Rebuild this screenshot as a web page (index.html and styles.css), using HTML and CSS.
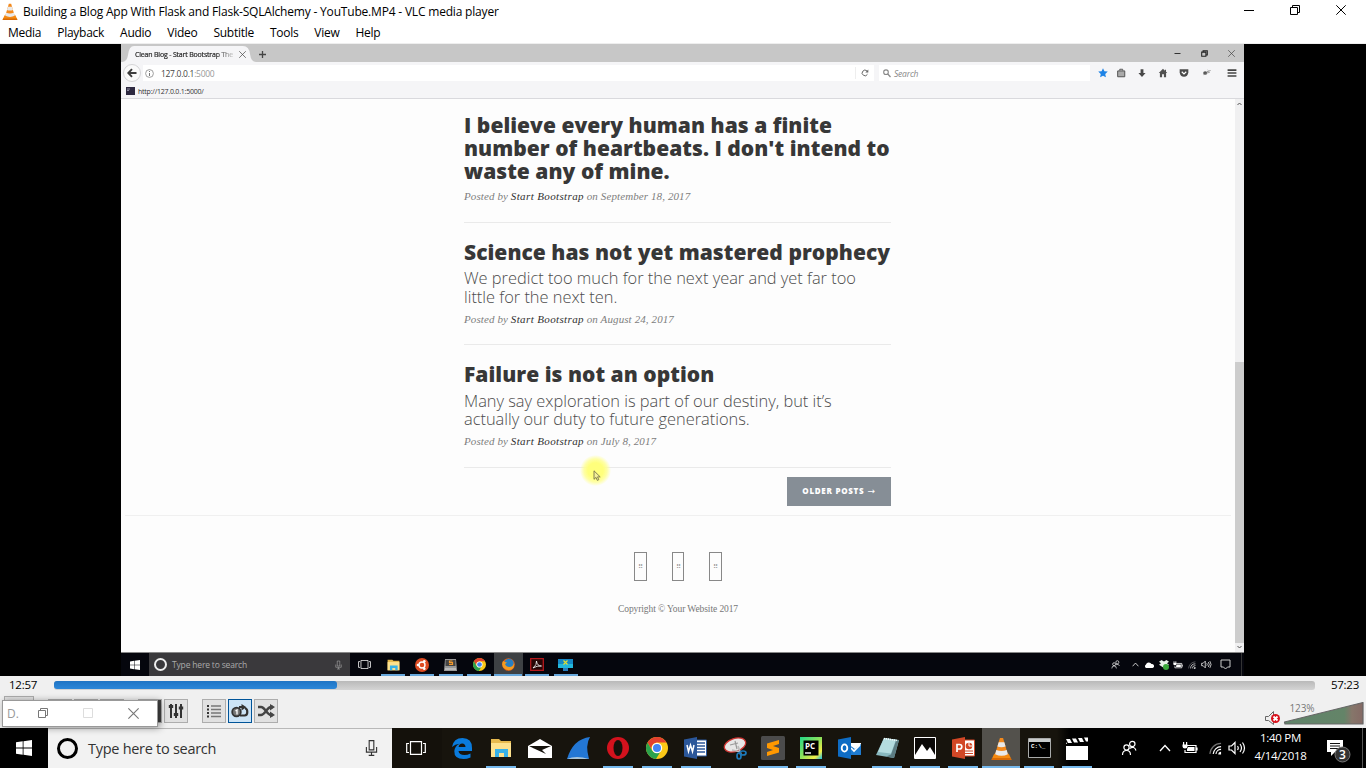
FILE: index.html
```html
<!DOCTYPE html>
<html lang="en">
<head>
<meta charset="utf-8">
<title>VLC media player</title>
<link rel="stylesheet" href="styles.css">
</head>
<body>
<svg width="0" height="0" class="defs">
  <symbol id="cone" viewBox="0 0 20 22"><path d="M3 16h14l2.500 5.500H.5z" fill="#f58a10"/><path d="M1 20h18l.7 2H.3z" fill="#d96a05"/><path d="M8.500 1h3l4.700 16q-6 3.500-12.500 0z" fill="#f3891c"/><path d="M7.300 5h5.400l1.200 4q-4 1.500-7.800 0zM5 12.500q5 2 10 0l1.100 4q-6 3-12.200 0z" fill="#e9e9e9"/></symbol>
  <symbol id="win" viewBox="0 0 16 16"><path d="M0 2.300 6.700 1.300V7.600H0zM7.500 1.200 16 0v7.600H7.500zM0 8.400h6.700v6.300L0 13.700zM7.500 8.400H16V16l-8.500-1.200z" fill="#fff"/></symbol>
  <symbol id="mic" viewBox="0 0 14 18"><path d="M4.500 1h5v10h-5zM1.500 8v5.500h11V8M7 13.500V17M4 17h6" fill="none" stroke="currentColor" stroke-width="1.200"/></symbol>
  <symbol id="task" viewBox="0 0 20 14"><path d="M4.500.7h11v12.600h-11zM3 2.500H.7v9H3M17 2.500h2.300v9H17" fill="none" stroke="#fff" stroke-width="1.200"/></symbol>
  <symbol id="folder" viewBox="0 0 22 20"><path d="M1 1h8l2 2h10v16H1z" fill="#e6b94e"/><path d="M1 5h20v14H1z" fill="#fde18d"/><path d="M5 11h13v8h-4v-4H9v4H5z" fill="#37b1e8"/></symbol>
  <symbol id="chrome" viewBox="0 0 22 22"><circle cx="11" cy="11" r="11" fill="#fbc817"/><path d="M1.500 5.500A11 11 0 0 1 20.500 5.500H11A5.500 5.500 0 0 0 6.200 13.800z" fill="#e2402f"/><path d="M1.500 5.500A11 11 0 0 0 10 22l5-8.300A5.500 5.500 0 0 1 6.200 13.700z" fill="#2ba24c"/><circle cx="11" cy="11" r="5.200" fill="#fff"/><circle cx="11" cy="11" r="4" fill="#4285f4"/></symbol>
  <symbol id="people" viewBox="0 0 16 16"><path d="M1.500 15q0-4.500 4-4.500t4 4.500M8.500 8.500q5-3 6.500 2" fill="none" stroke="#fff" stroke-width="1.200"/><circle cx="5.500" cy="7.500" r="2.600" fill="none" stroke="#fff" stroke-width="1.200"/><circle cx="11.300" cy="4" r="2.700" fill="none" stroke="#fff" stroke-width="1.200"/></symbol>
  <symbol id="up" viewBox="0 0 12 8"><path d="M1 7 6 1.500 11 7" fill="none" stroke="#fff" stroke-width="1.300"/></symbol>
  <symbol id="battery" viewBox="0 0 16 12"><path d="M5 3.500h9v7H3V8M15 5.500v3" fill="none" stroke="#fff" stroke-width="1.200"/><path d="M6 5h6.500v4H5V7zM.5 2.500h5v2q0 2-2.500 2T.5 4.500zM1 0h1.200v3H1zM4 0h1.200v3H4z" fill="#fff"/></symbol>
  <symbol id="wifi" viewBox="0 0 14 14"><g fill="none" stroke="#fff" stroke-width="1.200"><path d="M1 13A12 12 0 0 1 13 1.500" opacity=".45"/><path d="M4.500 13A8.500 8.500 0 0 1 13 5"/><path d="M7.500 13A5.500 5.500 0 0 1 13 8"/></g><path d="M10 13.500a3 3 0 0 1 3-3v3z" fill="#fff"/></symbol>
  <symbol id="sound" viewBox="0 0 18 14"><path d="M1 5h2.500L7 1.500v11L3.500 9H1zM9.500 5q1.500 2 0 4M12 3q3 4 0 8M14.500 1.500q4 5.500 0 11" fill="none" stroke="#fff" stroke-width="1.200"/></symbol>
  <symbol id="restore" viewBox="0 0 10 10"><path d="M.5 2.500h7v7h-7zM2.500 2.500v-2h7v7h-2" fill="none" stroke="currentColor"/></symbol>
  <symbol id="close" viewBox="0 0 10 10"><path d="M.3.3l9.400 9.400M9.700.3.300 9.700" fill="none" stroke="currentColor"/></symbol>
</svg>

<div class="desktop">
  <header class="titlebar">
    <svg class="app-cone"><use href="#cone"/></svg>
    <span class="t title">Building a Blog App With Flask and Flask-SQLAlchemy - YouTube.MP4 - VLC media player</span>
    <div class="winbtns">
      <svg width="10" height="10"><path d="M0 5.500h10" stroke="#000"/></svg>
      <svg width="10" height="10"><use href="#restore"/></svg>
      <svg width="10" height="10"><use href="#close"/></svg>
    </div>
  </header>
  <nav class="menubar">
    <span>Media</span><span>Playback</span><span>Audio</span><span>Video</span><span>Subtitle</span><span>Tools</span><span>View</span><span>Help</span>
  </nav>

  <main class="stage">
    <section class="video">
      <div class="tabs">
        <div class="tab"><span class="t tab-text">Clean Blog - Start Bootstrap The</span><svg width="7" height="7" viewBox="0 0 10 10"><use href="#close"/></svg></div>
        <svg class="plus" width="9" height="9"><path d="M4.500 1v7M1 4.500h7" stroke="#444" stroke-width="1.300"/></svg>
        <div class="ff-win">
          <svg width="7" height="7"><path d="M.5 3.500h6" stroke="#333"/></svg>
          <svg width="7" height="7" viewBox="0 0 10 10"><path d="M1 3h6v6H1zM3 3V1h6v6H7" fill="none" stroke="#222" stroke-width="1.500"/></svg>
          <svg width="7" height="7" viewBox="0 0 10 10"><use href="#close"/></svg>
        </div>
      </div>
      <div class="navrow">
        <div class="back"><svg width="10" height="10" viewBox="0 0 10 10"><path d="M9.500 5H2M5 1.200 1.300 5 5 8.800" fill="none" stroke="#3d3d3d" stroke-width="1.900"/></svg></div>
        <div class="urlbar">
          <svg width="9" height="9" viewBox="0 0 9 9"><circle cx="4.500" cy="4.500" r="3.900" fill="none" stroke="#888" stroke-width=".8"/><path d="M4.500 2v1M4.500 4v3" stroke="#777"/></svg>
          <span class="t url">127.0.0.1<i>:5000</i></span>
          <span class="reload"><svg width="8" height="8" viewBox="0 0 8 8"><path d="M6.500 5.200A2.800 2.800 0 1 1 6 2" fill="none" stroke="#666"/><path d="M7.300.5v3H4.300z" fill="#666"/></svg></span>
        </div>
        <div class="ffsearch"><svg width="8" height="9" viewBox="0 0 8 9"><circle cx="3" cy="3.200" r="2.300" fill="none" stroke="#888" stroke-width="1.100"/><path d="M4.800 5 7.500 8" stroke="#888" stroke-width="1.200"/></svg><span class="t">Search</span></div>
        <div class="fficons">
          <svg viewBox="0 0 12 12"><path d="M6 .2l1.700 3.600 4 .5-3 2.800.8 4.100L6 9.200 2.500 11.200l.8-4.100L.3 4.300l4-.5z" fill="#1e83e6"/></svg>
          <svg viewBox="0 0 12 12"><path d="M2 3.500h8.500v7H2z" fill="#aaa" stroke="#555" stroke-width="1.200"/><path d="M4.500 3V1.500h3.500V3" fill="none" stroke="#555" stroke-width="1.200"/></svg>
          <svg viewBox="0 0 12 12"><path d="M4.300 1.500h3.400V6h2.600L6 10.800 1.700 6h2.600z" fill="#484848"/></svg>
          <svg viewBox="0 0 12 12"><path d="M6 1 .9 6h1.400v5h2.600V7.500h2.200V11h2.600V6h1.400L9.600 4.500V2H8.200v1.200z" fill="#505050"/></svg>
          <svg viewBox="0 0 12 12"><path d="M.8 1.500h10.400v4Q10.500 10.500 6 10.500T.8 5.500z" fill="#4a4a4a"/><path d="M3.300 4.500 6 7l2.700-2.500" fill="none" stroke="#fff" stroke-width="1.400"/></svg>
          <svg viewBox="0 0 12 12"><ellipse cx="5" cy="6" rx="2.400" ry="2" fill="#555"/><path d="M7 4.500 11.500 3M7 6l3.500-.8M3 8l4-1M8 2.500l1 1" stroke="#888"/></svg>
          <svg viewBox="0 0 12 12"><path d="M.7 2.500h10.600M.7 6h10.600M.7 9.500h10.600" stroke="#444" stroke-width="1.900"/></svg>
        </div>
      </div>
      <div class="bookmarks"><svg width="9" height="8"><path d="M0 0h9v8H0z" fill="#2d2940"/><path d="M1 2h3M1 3.500h2" stroke="#aab" stroke-width=".8"/></svg><span class="t">http://127.0.0.1:5000/</span></div>

      <div class="page">
        <div class="content">
          <div class="posts">
            <article class="post">
              <h2>I believe every human has a finite<br>number of heartbeats. I don't intend to<br>waste any of mine.</h2>
              <p class="meta">Posted by <b>Start Bootstrap</b> on September 18, 2017</p>
            </article>
            <article class="post">
              <h2>Science has not yet mastered prophecy</h2>
              <h3>We predict too much for the next year and yet far too<br>little for the next ten.</h3>
              <p class="meta">Posted by <b>Start Bootstrap</b> on August 24, 2017</p>
            </article>
            <article class="post">
              <h2>Failure is not an option</h2>
              <h3>Many say exploration is part of our destiny, but it’s<br>actually our duty to future generations.</h3>
              <p class="meta">Posted by <b>Start Bootstrap</b> on July 8, 2017</p>
            </article>
            <div class="pager"><a class="older">OLDER POSTS <span class="arrow">→</span></a></div>
          </div>
          <footer class="foot">
            <div class="social"><span>⠿</span><span>⠿</span><span>⠿</span></div>
            <p>Copyright © Your Website 2017</p>
          </footer>
          <div class="halo"><svg width="8" height="11" viewBox="0 0 8 11"><path d="M1 .8v8.500l2-1.900 1.300 3 1.500-.7-1.300-2.800h2.700z" fill="#f3ef9a" stroke="#77734a" stroke-width=".9"/></svg></div>
        </div>
        <div class="scroll"><svg width="5" height="4"><path d="M.5 3 2.500 1l2 2" fill="none" stroke="#555"/></svg><i></i><svg width="5" height="4"><path d="M.5 1l2 2 2-2" fill="none" stroke="#555"/></svg></div>
      </div>

      <div class="minibar">
        <div class="ministart"><svg width="10" height="10"><use href="#win"/></svg></div>
        <div class="minisearch"><i class="ring"></i><span class="t">Type here to search</span><svg class="mmic" width="7" height="10"><use href="#mic"/></svg></div>
        <div class="miniapps">
          <div><svg width="13" height="9"><use href="#task"/></svg></div>
          <div class="on"><svg width="13" height="12"><use href="#folder"/></svg></div>
          <div class="on"><svg width="14" height="14" viewBox="0 0 14 14"><circle cx="7" cy="7" r="7" fill="#dd4b22"/><circle cx="7" cy="7" r="3" fill="none" stroke="#fff" stroke-width="1.400"/><g fill="#fff"><circle cx="3" cy="7" r="1.300"/><circle cx="9.300" cy="3.300" r="1.300"/><circle cx="9.300" cy="10.700" r="1.300"/></g></svg></div>
          <div class="on"><svg width="13" height="12" viewBox="0 0 13 12"><path d="M1 0h11l1 12H0z" fill="#999"/><path d="M1.500 1h10v6h-10z" fill="#444"/><path d="M8.500 2H5.500v1.700h3v1.800H5" fill="none" stroke="#f59a2c" stroke-width="1.200"/><path d="M1 9h11v2H1z" fill="#bbb"/></svg></div>
          <div class="on"><svg width="13" height="13"><use href="#chrome"/></svg></div>
          <div class="on active"><svg width="13" height="13" viewBox="0 0 13 13"><circle cx="6.500" cy="6.500" r="6.300" fill="#e66012"/><circle cx="7" cy="5.500" r="4.700" fill="#287fc2"/><path d="M1 3q2 1 4 1.500L3 6q1 3 4.500 3T12 5q.8 4.500-2.500 6.500t-7-1T1 3z" fill="#f49b20"/></svg></div>
          <div class="on"><svg width="14" height="13" viewBox="0 0 14 13"><path d="M.7.7h12.600v11.600H.7z" fill="#270606" stroke="#b4191d" stroke-width="1.300"/><path d="M3 10q4-3 3.500-7Q7 8 11.500 8 7 7.500 3 10z" fill="none" stroke="#fff" stroke-width=".8"/></svg></div>
          <div class="on"><svg width="15" height="12" viewBox="0 0 15 12"><path d="M0 0h15v9H0z" fill="#1688c5"/><path d="M0 5h15v4H0z" fill="#22b7dc"/><path d="M5.500 1.500l4 4M9.500 1.500l-4 4" stroke="#dfdf35" stroke-width="1.200"/><path d="M5 9h5v3H5z" fill="#257bbb"/></svg></div>
        </div>
        <div class="minitray">
          <svg width="9" height="9"><use href="#people"/></svg><svg width="7" height="5"><use href="#up"/></svg>
          <svg width="10" height="6" viewBox="0 0 10 6"><path d="M2 6a2 2 0 0 1 0-3.500 3 3 0 0 1 5.500-.5A2 2 0 0 1 8.500 6z" fill="#fff"/></svg>
          <svg width="10" height="10" viewBox="0 0 10 10"><path d="M2.500 0 5 1.500 7.500 0 10 1.700 8 3.200l2 1.500L5 8 0 4.700l2-1.500L0 1.700z" fill="#e8f2e8"/><circle cx="7" cy="7" r="3" fill="#3aa83a"/></svg>
          <svg width="10" height="8"><use href="#battery"/></svg><svg width="8" height="8"><use href="#wifi"/></svg><svg width="11" height="9"><use href="#sound"/></svg>
          <svg width="11" height="11" viewBox="0 0 11 11"><path d="M1 1h9v7H7.500l-2 2-2-2H1z" fill="none" stroke="#ccc"/></svg>
        </div>
      </div>
    </section>
  </main>

  <div class="seek"><span class="t">12:57</span><div class="track"><i></i></div><span class="t">57:23</span></div>
  <div class="controls">
    <div class="btns">
      <b class="play"></b>
      <div><b></b><b></b><b></b></div>
      <div><b class="dark"></b><b><svg width="16" height="16" viewBox="0 0 16 16"><path d="M3 1v14M8 1v14M13 1v14" stroke="#333" stroke-width="2"/><path d="M.8 3.500h4.400M5.800 11.500h4.400M10.800 5h4.400" stroke="#333" stroke-width="3"/></svg></b></div>
      <div><b><svg width="16" height="14" viewBox="0 0 16 14"><path d="M1 2h2M1 5.500h2M1 9h2M1 12.500h2" stroke="#333" stroke-width="1.800"/><path d="M5 2h10M5 5.500h10M5 9h10M5 12.500h10" stroke="#777" stroke-width="1.400"/></svg></b><b class="sel"><svg width="18" height="14" viewBox="0 0 18 14"><path d="M8 3h4M9 11.500h4.500q2.800 0 2.800-3.500T14 4.500" fill="none" stroke="#333" stroke-width="2.200"/><path d="M10.500 0l5 3.300-5 3.300z" fill="#333"/><circle cx="5.500" cy="8" r="4.300" fill="#777" stroke="#333" stroke-width="1.800"/><path d="M4.500 7 6 6v4.500" fill="none" stroke="#fff" stroke-width="1.300"/></svg></b><b><svg width="18" height="14" viewBox="0 0 18 14"><path d="M1 3h3q2 0 5 4t5 4h2M1 11h3q2 0 5-4t5-4h2" fill="none" stroke="#444" stroke-width="2.400"/><path d="M13 0l5 3-5 3.500zM13 7.500l5 3.500-5 3z" fill="#444"/></svg></b></div>
    </div>
    <div class="volume">
      <svg width="100" height="32" viewBox="0 0 100 32"><defs><linearGradient id="vg"><stop offset="0" stop-color="#60846a"/><stop offset=".76" stop-color="#648468"/><stop offset=".86" stop-color="#86766a"/><stop offset="1" stop-color="#856a65"/></linearGradient></defs><path d="M1.500 22.500h3l5-5v13l-5-4h-3z" fill="#eee" stroke="#666"/><circle cx="11.500" cy="24.500" r="4.500" fill="#d8101a"/><path d="M9.500 22.500l4 4M13.500 22.500l-4 4" stroke="#fff" stroke-width="1.800"/><path d="M20.500 28 99 8.500v21.500H21z" fill="url(#vg)" stroke="#666" stroke-linejoin="round" stroke-width="1.200"/><text x="25.500" y="18" textLength="25" class="vol">123%</text></svg>
    </div>
    <div class="popup"><span>D.</span><svg width="10" height="10" color="#777"><use href="#restore"/></svg><svg width="10" height="10"><path d="M.5.500h9v9h-9z" fill="none" stroke="#ddd"/></svg><svg width="11" height="11" color="#777"><use href="#close"/></svg></div>
  </div>

  <footer class="taskbar">
    <div class="start"><svg width="16" height="16"><use href="#win"/></svg></div>
    <div class="search"><i class="ring"></i><span class="t">Type here to search</span><svg class="bmic" width="13" height="18"><use href="#mic"/></svg></div>
    <div class="tview"><svg width="20" height="14"><use href="#task"/></svg></div>
    <div class="apps">
      <div><svg width="20" height="21" viewBox="0 0 20 21"><path d="M0 9Q1.500 0 10.500 0 20 0 20 10v3H6.500q.5 4 6 4 3 0 6-1.500v4Q15 21 11.500 21 2 21 2.300 13 2.800 8 7.500 5.700 3 6 0 9zm6.600 0h6.900q-.2-3.500-3.300-3.500Q7.200 5.500 6.600 9z" fill="#0a7bdc"/></svg></div>
      <div class="on"><svg width="22" height="20"><use href="#folder"/></svg></div>
      <div><svg width="24" height="19" viewBox="0 0 24 19"><path d="M0 7 12 0l12 7v12H0z" fill="#fff"/><path d="M1 7l22 0-9 4 4 4L6 9.500z" fill="#15120c"/></svg></div>
      <div><svg width="23" height="22" viewBox="0 0 23 22"><path d="M0 22Q6 2 23 0q-5 8-1 22z" fill="#2377d4"/><path d="M0 22q9-4 22 0z" fill="#a9c5d8"/></svg></div>
      <div class="on"><svg width="22" height="22" viewBox="0 0 22 22"><circle cx="11" cy="11" r="11" fill="#d3121d"/><ellipse cx="11" cy="11" rx="4.500" ry="8" fill="#15120c"/></svg></div>
      <div class="on"><svg width="22" height="22"><use href="#chrome"/></svg></div>
      <div class="on"><svg width="23" height="22" viewBox="0 0 23 22"><path d="M11 3h11.500v16H11z" fill="#fff" stroke="#2b579a"/><path d="M13 6h8M13 9h8M13 12h8M13 15h8" stroke="#2b579a" stroke-width="1.300"/><path d="M0 2.500 13 0v22L0 19.500z" fill="#2b579a"/><path d="M3 8l1.500 6.500L6.500 8l2 6.500L10 8" fill="none" stroke="#fff" stroke-width="1.500"/></svg></div>
      <div><svg width="24" height="23" viewBox="0 0 24 23"><ellipse cx="12" cy="8" rx="11" ry="6.500" transform="rotate(-18 12 8)" fill="#e7e7e7" stroke="#cf3532" stroke-width="1.300"/><path d="M7 8l8-2M12 4l2 8" stroke="#999" stroke-width="1.200"/><path d="M9 13l9 2M15 9l3 8" stroke="#bbb" stroke-width="1.600"/><ellipse cx="16" cy="19" rx="2" ry="3" fill="none" stroke="#1d79b9" stroke-width="1.700"/><ellipse cx="20" cy="16" rx="3" ry="2" fill="none" stroke="#1d79b9" stroke-width="1.700"/></svg></div>
      <div class="on"><svg width="24" height="24" viewBox="0 0 24 24"><rect width="24" height="24" rx="1.500" fill="#4b4b4b"/><path d="M6 7.500 18 4v4l-6 2 6 2v4.500L6 20v-4l6-2-6-2z" fill="#ff9800"/></svg></div>
      <div class="on"><svg width="22" height="22" viewBox="0 0 22 22"><defs><linearGradient id="pc" x2="1" y2="1"><stop offset="0" stop-color="#21d789"/><stop offset=".5" stop-color="#8fe35a"/><stop offset=".8" stop-color="#f4ee48"/><stop offset="1" stop-color="#18bce8"/></linearGradient></defs><path d="M0 0h22v22H0z" fill="url(#pc)"/><path d="M3.500 3.500h15v15h-15z" fill="#000"/><text x="5" y="12" class="pct">PC</text><path d="M5 16h6" stroke="#fff" stroke-width="1.400"/></svg></div>
      <div><svg width="23" height="22" viewBox="0 0 23 22"><path d="M10 6h13v12H10z" fill="#fff"/><path d="M10 7l7 5 6-5v11H10z" fill="#1e7bd0"/><path d="M13 11l3 3 6-6" fill="none" stroke="#fff" stroke-width="1.600"/><path d="M0 2.500 13 0v22L0 19.500z" fill="#0e6cc4"/><ellipse cx="6.500" cy="11" rx="2.800" ry="3.600" fill="none" stroke="#fff" stroke-width="1.800"/></svg></div>
      <div class="on"><svg width="23" height="22" viewBox="0 0 23 22"><path d="M8 1l15 2-5 18L0 18z" fill="#88b8be"/><path d="M8 1l12 1.500-5 14L2 15z" fill="#b4dcdf"/><path d="M20 4l3-1-5 18-8-1.500 5-2z" fill="#5c7c82"/><path d="M8 1.500l13 2" stroke="#fff" stroke-width="1.500" stroke-dasharray="1 1"/></svg></div>
      <div class="on"><svg width="22" height="22" viewBox="0 0 22 22"><path d="M.5.500h21v21H.500z" fill="#0b0907" stroke="#fff"/><path d="M1 18 8 7l5 7 3-4 5 8v3H1z" fill="#fff"/></svg></div>
      <div class="on"><svg width="23" height="22" viewBox="0 0 23 22"><path d="M11 3h11.500v16H11z" fill="#fff" stroke="#d24726"/><circle cx="17" cy="9" r="3.300" fill="#d24726"/><path d="M17 9V5.500M17 9h3.500" stroke="#fff"/><path d="M13 14h8M13 16.500h8" stroke="#d24726" stroke-width="1.200"/><path d="M0 2.500 13 0v22L0 19.500z" fill="#d24726"/><path d="M5 15V7.500h2.500q2.300 0 2.300 2.200T7.500 12H5" fill="none" stroke="#fff" stroke-width="1.700"/></svg></div>
      <div class="on active"><svg width="21" height="23"><use href="#cone"/></svg></div>
      <div class="on"><svg width="23" height="20" viewBox="0 0 23 20"><path d="M.5.500h22v19H.5z" fill="#000" stroke="#a8aaaa"/><path d="M1 1h21v3H1z" fill="#c9cccc"/><text x="3" y="10" class="cmd">C:\_</text></svg></div>
      <div class="on"><svg width="23" height="23" viewBox="0 0 23 23"><path d="M0 9h22v14H0z" fill="#fff"/><path d="M0 2l4 0 2 4H2zM6 1.500h4l2 4H8zM12 1h4l2 4h-4zM18 .5h4v4h-2zM0 5l1 2H0z" fill="#fff"/></svg></div>
    </div>
    <div class="tray">
      <svg width="16" height="16"><use href="#people"/></svg><svg width="12" height="8"><use href="#up"/></svg><svg width="16" height="12"><use href="#battery"/></svg><svg width="13" height="13"><use href="#wifi"/></svg><svg width="18" height="14"><use href="#sound"/></svg>
      <div class="clock"><span class="t">1:40 PM</span><span class="t">4/14/2018</span></div>
      <svg class="note" width="26" height="26" viewBox="0 0 26 26"><path d="M1 3h16v12H9l-4 4v-4H1z" fill="#fff"/><path d="M4 6.500h10M4 9h10M4 11.500h10" stroke="#111"/><circle cx="16.500" cy="17.500" r="7.500" fill="#333" stroke="#777"/><text x="16.500" y="22" text-anchor="middle" class="count">3</text></svg>
    </div>
  </footer>
</div>
</body>
</html>
```
FILE: styles.css
```css
* { box-sizing: border-box; }
body { margin: 0; background: #000; font-family: "Open Sans", "Noto Sans", sans-serif; overflow: hidden; }
svg { display: block; flex: none; }
h2, h3, p { margin: 0; white-space: nowrap; }
.defs { position: absolute; }
.t { display: inline-block; white-space: nowrap; }
.desktop { width: 1366px; height: 768px; display: flex; flex-direction: column; }

.titlebar { height: 23px; background: #fff; display: flex; align-items: center; font-size: 12px; color: #000; letter-spacing: -.19px; }
.app-cone { width: 16px; height: 17px; margin: 0 5px 0 2px; }
.winbtns { margin-left: auto; display: flex; gap: 36px; padding: 0 20px 3px 0; }
.menubar { height: 21px; background: #fff; border-bottom: 1px solid #eee; display: flex; align-items: center; gap: 16px; padding-left: 8px; font-size: 12px; line-height: 20px; letter-spacing: -.27px; }

.stage { height: 632px; padding: 0 122px 0 121px; background: #000; }
.video { height: 632px; display: flex; flex-direction: column; background: #fdfdfd; }
.tabs { height: 18px; background: #c7c7c7; display: flex; align-items: center; color: #444; }
.tab { margin: 2px 0 0 1px; width: 134px; height: 16px; background: #f5f5f7; clip-path: path("M0 16Q5 16 6 9Q7 0 12 0H121Q127 0 128 8Q129 16 134 16Z"); display: flex; align-items: center; padding-left: 13px; gap: 6px; font-size: 7px; letter-spacing: -.185px; }
.tab-text { background: linear-gradient(90deg, #222 82%, #ccc); -webkit-background-clip: text; color: transparent; -webkit-text-stroke: .2px transparent; }
.plus { margin: 2px 0 0 2px; }
.ff-win { margin-left: auto; display: flex; gap: 20px; padding-right: 9px; }
.navrow { height: 22px; background: #f5f5f7; display: flex; align-items: center; }
.back { width: 18px; height: 18px; margin-left: 2px; border: 1px solid #d4d4d6; border-radius: 50%; background: #fafafa; display: flex; align-items: center; justify-content: center; }
.urlbar { width: 731px; height: 16px; margin-left: 2px; background: #fff; display: flex; align-items: center; font-size: 8.500px; gap: 7px; padding-left: 2px; }
.url { color: #444; letter-spacing: -.3px; }
.url i { font-style: normal; color: #999; }
.reload { margin-left: auto; width: 19px; height: 12px; border-left: 1px solid #eee; display: flex; align-items: center; justify-content: center; }
.ffsearch { width: 211px; height: 16px; margin-left: 5px; background: #fff; display: flex; align-items: center; padding-left: 4px; gap: 3px; font-size: 8.500px; font-style: italic; color: #888; letter-spacing: -.2px; }
.fficons { display: flex; margin: 0 7px 0 auto; gap: 11.300px; }
.fficons svg { width: 10px; height: 10px; }
.fficons svg:nth-child(1) { margin-right: -4px; }
.fficons svg:nth-child(7) { margin-left: 5px; }
.bookmarks { height: 15px; background: #f5f5f7; border-bottom: 1px solid #d9d9dd; display: flex; align-items: center; gap: 3px; padding-left: 5px; font-size: 7px; letter-spacing: -.22px; color: #333; }

.page { height: 553px; display: flex; background: #fdfdfd; }
.content { flex: 1; position: relative; }
.posts { width: 427px; margin-left: 343px; padding-top: 15px; }
.post { border-bottom: 1px solid #eaeaea; margin-bottom: 18.500px; height: 104px; color: #373737; }
.post:first-child { height: 108.500px; }
.post:nth-child(2) { margin-bottom: 17.500px; }
.post:nth-child(3) { height: 105px; margin-bottom: 9.500px; }
.post h2 { font-size: 21px; line-height: 23.200px; font-weight: 800; letter-spacing: .035px; }
.post:first-child .meta { margin-top: 4px; }
.post:nth-child(3) h2 { padding-bottom: 1px; }
.post h3 { font-size: 16.400px; line-height: 18.200px; font-weight: 300; margin-top: 5.100px; color: #4c4c4c; letter-spacing: -.01px; }
.meta { font: italic 11px/16px "Liberation Serif", serif; letter-spacing: .1px; color: #7d7d7d; margin-top: 5px; }
.meta b { font-weight: normal; color: #303030; letter-spacing: .37px; }
.pager { display: flex; justify-content: flex-end; }
.older { width: 104px; height: 29px; background: #868e96; color: #fff; font-size: 8px; font-weight: 800; letter-spacing: .72px; display: flex; align-items: center; justify-content: center; gap: 3px; padding-bottom: 2px; white-space: nowrap; }
.arrow { font-family: "DejaVu Sans", sans-serif; font-size: 9px; font-weight: 400; }
.foot { margin: 9px 4px 0; border-top: 1px solid #f0f0f0; text-align: center; padding-top: 36px; }
.social { display: flex; justify-content: center; gap: 25px; }
.social span { width: 12.500px; height: 29px; border: 1px solid #888; font-size: 7px; line-height: 27px; color: #999; }
.foot p { margin-top: 20px; font: 9.500px/16px "Liberation Serif", serif; letter-spacing: -.09px; color: #777; }
.halo { position: absolute; left: 459px; top: 356px; width: 31px; height: 31px; border-radius: 50%; background: radial-gradient(#ffff7c 35%, #ffff8ecc 52%, #ffffa000 71%); padding: 15px 0 0 13px; }
.scroll { width: 9px; background: #f0f0f1; display: flex; flex-direction: column; align-items: center; padding: 3px 0; }
.scroll i { width: 9px; height: 281px; background: #cdcdcd; margin: auto 0 2px; }

.minibar { height: 24px; background: #05060d; border-top: 1px solid #888; display: flex; color: #aaa; }
.ministart { width: 28px; display: flex; align-items: center; justify-content: center; }
.minisearch { width: 201px; background: #3a393c; display: flex; align-items: center; font-size: 8.500px; letter-spacing: -.17px; padding: 0 8px 0 5px; }
.ring { border: 2px solid #eee; border-radius: 50%; width: 13px; height: 13px; margin-right: 5px; }
.mmic { margin-left: auto; }
.miniapps { display: flex; width: 230px; }
.miniapps div { flex: 1; display: flex; align-items: center; justify-content: center; background-repeat: no-repeat; }
.miniapps .on { background-image: linear-gradient(#68a8dc, #68a8dc); background-size: 24px 2px; background-position: 50% 100%; }
.miniapps .active { background-color: #3e4144; background-size: 28px 2px; }
.minitray { margin-left: auto; border-right: 1px solid #333; margin-right: 2px; display: flex; align-items: center; gap: 4.700px; padding-right: 10.500px; }
.minitray svg:nth-child(1) { margin-right: 8px; }
.minitray svg:nth-child(8) { margin-left: 3px; }

.seek { height: 18px; background: #f0f0f0; display: flex; align-items: center; padding: 0 7px 1px 9px; font-size: 11.500px; letter-spacing: -.26px; }
.seek .track { width: 1261px; height: 9px; margin: 1px auto 0 17px; border-radius: 3px; background: linear-gradient(#b9b9b9, #d4d4d4); }
.track i { display: block; width: 283px; height: 8px; border-radius: 3px; background: linear-gradient(#1f74c4, #2c87d9); }
.controls { height: 34px; background: #f0f0f0; position: relative; display: flex; justify-content: space-between; }
.btns { display: flex; gap: 14px; padding: 5px 0 0 4px; }
.btns div { display: flex; gap: 2px; }
.btns b { width: 24px; height: 24px; border: 1px solid #adadad; background: #e1e1e1; display: flex; align-items: center; justify-content: center; }
.btns .play { width: 30px; height: 30px; margin-top: -3px; }
.btns .dark { background: linear-gradient(90deg, #e1e1e1 80%, #444 80%); }
.btns .sel { border-color: #005499; background: #cce4f7; }
.volume { padding-right: 2px; }
.vol { font-size: 10px; fill: #777; }
.popup { position: absolute; left: 2px; top: 6px; width: 156px; height: 27px; border: 1px solid #999; background: #fff; display: flex; align-items: center; font-size: 12px; color: #999; padding: 0 18px 1px 4px; justify-content: space-between; box-shadow: 2px 1px 7px #0006; }
.popup span { margin-right: -16px; }

.taskbar { height: 40px; display: flex; background: #000; color: #fff; }
.start { width: 48px; display: flex; align-items: center; justify-content: center; }
.search { width: 344px; background: #f2f2f2; border-top: 1px solid #b8b8b8; color: #333; display: flex; align-items: center; padding: 0 14px 1px 9px; font-size: 14.500px; letter-spacing: -.28px; }
.search .ring { width: 21px; height: 21px; border: 3px solid #000; margin-right: 10px; }
.bmic { margin-left: auto; }
.tview { width: 50px; background: #14110b; display: flex; align-items: center; justify-content: center; padding-right: 2px; }
.apps { display: flex; width: 654px; background: linear-gradient(90deg, #17140d, #17140d 94%, #000 96%); }
.apps div { flex: 0 0 38px; display: flex; align-items: center; justify-content: center; background-repeat: no-repeat; }
.apps div:nth-child(-n+8) { flex-basis: 39px; }
.apps .on { background-image: linear-gradient(#76b9ed, #76b9ed); background-size: 30px 2px; background-position: 50% 100%; }
.apps .active { background-color: #53514c; background-size: 38px 2px; }
.pct { font-size: 8px; font-weight: 700; fill: #fff; }
.cmd { font: bold 6px "Liberation Mono", monospace; fill: #fff; }
.tray { flex: 1; display: flex; align-items: center; padding-left: 24.500px; border-right: 1px solid #555; margin-right: 3px; }
.tray > svg { margin-right: 11px; }
.tray > svg:nth-child(1) { margin-right: 22px; }
.tray > svg:nth-child(5) { margin-right: 8px; margin-left: -5px; }
.clock { width: 54px; display: flex; flex-direction: column; align-items: center; font-size: 11.500px; line-height: 18px; letter-spacing: -.25px; padding-bottom: 2px; }
.tray > .note { margin: 4px 0 0 18px; }
.count { font-size: 12px; fill: #fff; font-weight: 600; }
```
